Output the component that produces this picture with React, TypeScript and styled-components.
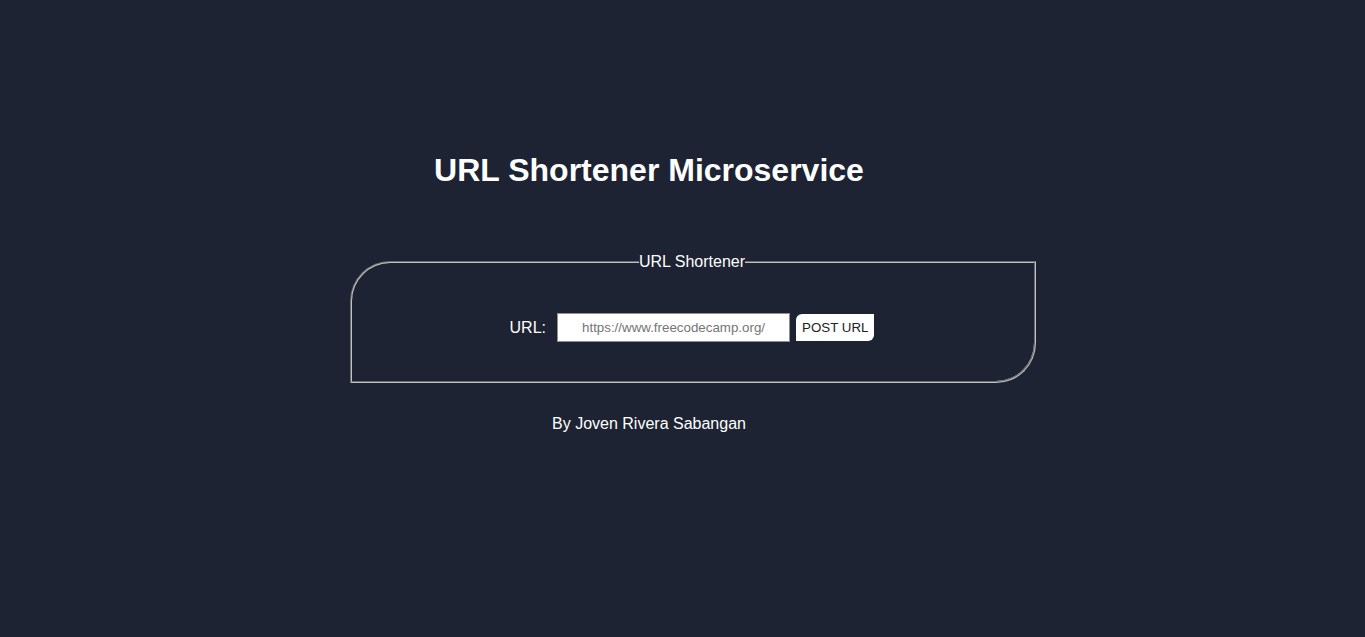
import React from "react";
import styled, { createGlobalStyle } from "styled-components";

const Global = createGlobalStyle`
  html, body { margin: 0; padding: 0; background: #1d2333; }
  body { font-family: "Liberation Sans", Arial, sans-serif; color: #ffffff; }
  #root { min-height: 637px; }
`;

const Page = styled.div`
  width: 1365px;
  padding-top: 152px;
  box-sizing: border-box;
`;

const Title = styled.h1`
  margin: 0;
  padding-right: 67px;
  text-align: center;
  font-size: 32px;
  line-height: 37px;
  font-weight: 700;
  color: #ffffff;
`;

const Box = styled.fieldset`
  margin: 64px 0 0 350px;
  width: 686px;
  box-sizing: border-box;
  border: 2px groove #c0c0c0;
  border-radius: 40px 0 40px 0;
  padding: 42px 2px 39px 0;
  min-width: 0;
`;

const Legend = styled.legend`
  margin: 0 auto;
  padding: 0;
  font-size: 16px;
  line-height: 18px;
  color: #ffffff;
`;

const Form = styled.form`
  display: flex;
  align-items: center;
  justify-content: center;
  margin: 0;
`;

const Label = styled.label`
  font-size: 16px;
  color: #ffffff;
  margin-right: 11px;
`;

const Input = styled.input`
  width: 233px;
  height: 29px;
  box-sizing: border-box;
  border: 1px solid #8f8f8f;
  background: #ffffff;
  padding: 0 4px;
  text-align: center;
  font-family: "Liberation Sans", Arial, sans-serif;
  font-size: 13.33px;
  color: #333;
  outline: none;
  &::placeholder { color: #757575; }
`;

const Button = styled.button`
  margin-left: 6px;
  height: 27px;
  box-sizing: border-box;
  padding: 0 6px;
  border: none;
  background: #ffffff;
  border-radius: 6px 0 6px 0;
  font-family: "Liberation Sans", Arial, sans-serif;
  font-size: 13.33px;
  color: #222;
  cursor: pointer;
`;

const Footer = styled.p`
  margin: 32px 0 0;
  padding-right: 67px;
  text-align: center;
  font-size: 16px;
  line-height: 18px;
  color: #ffffff;
`;

export default function App() {
  return (
    <>
      <Global />
      <Page>
        <Title>URL Shortener Microservice</Title>
        <Box>
          <Legend>URL Shortener</Legend>
          <Form onSubmit={(e) => e.preventDefault()}>
            <Label htmlFor="url_input">URL:</Label>
            <Input id="url_input" type="text" name="url" placeholder="https://www.freecodecamp.org/" />
            <Button type="submit">POST URL</Button>
          </Form>
        </Box>
        <Footer>By Joven Rivera Sabangan</Footer>
      </Page>
    </>
  );
}
